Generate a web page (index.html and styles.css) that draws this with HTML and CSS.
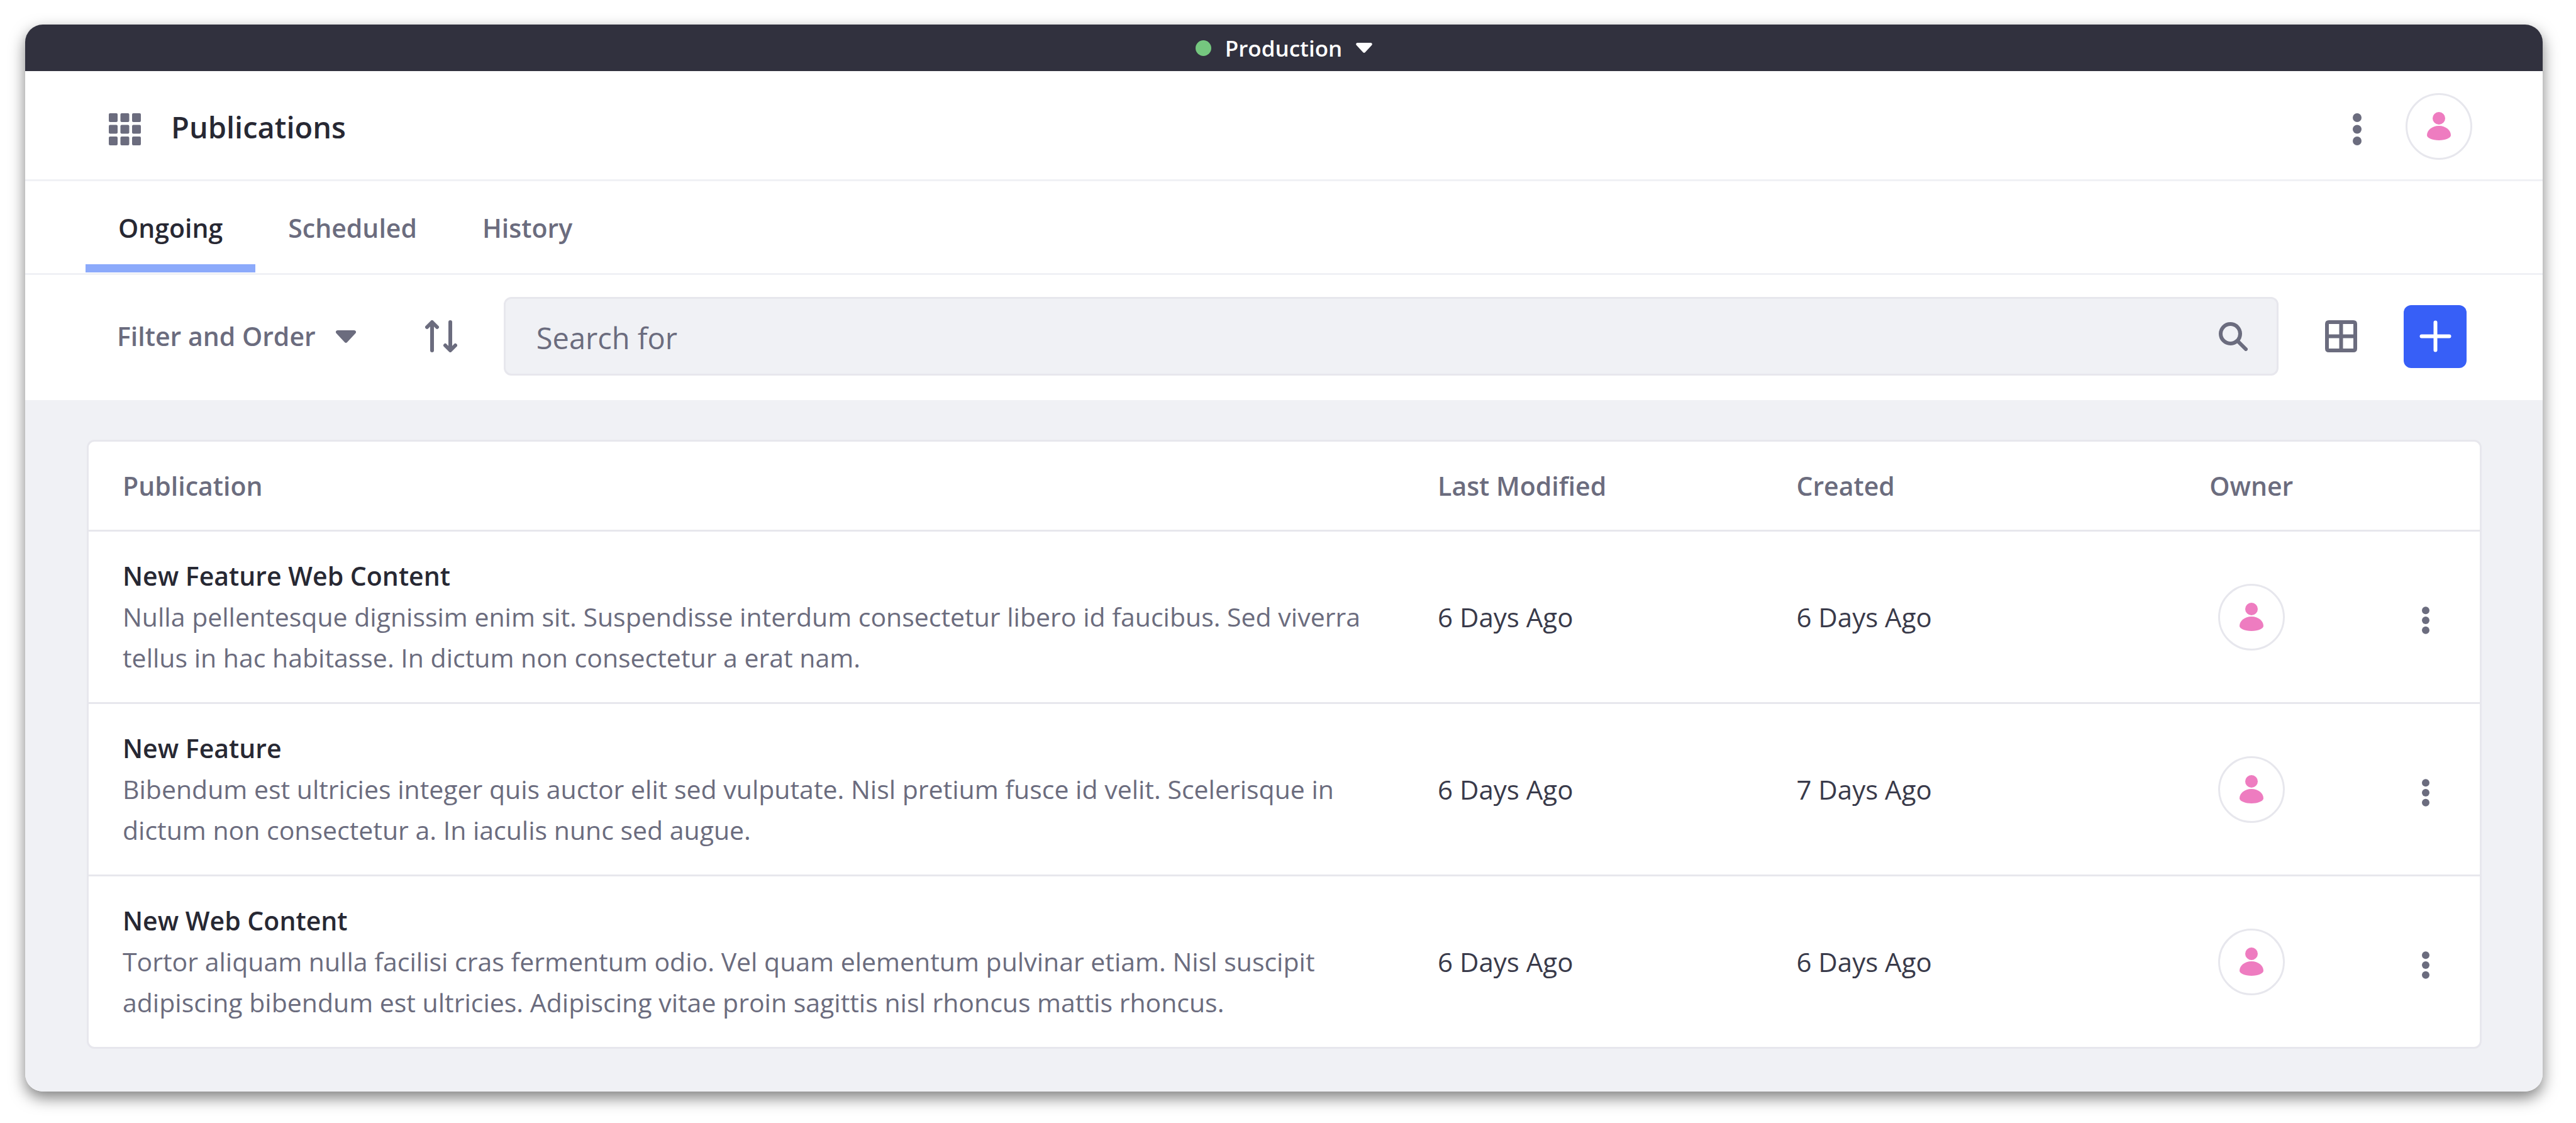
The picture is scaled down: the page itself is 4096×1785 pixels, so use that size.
FILE: index.html
```html
<!DOCTYPE html>
<html lang="en">
<head>
<meta charset="utf-8">
<title>Publications</title>
<link rel="stylesheet" href="styles.css">
</head>
<body>
<svg class="sprite" aria-hidden="true">
  <symbol id="kebab" viewBox="0 0 14 51"><circle cx="7" cy="7" r="7"/><circle cx="7" cy="25.5" r="7"/><circle cx="7" cy="44" r="7"/></symbol>
  <symbol id="caret" viewBox="0 0 32 20"><path d="M3 0h26c3 0 4 3 2 5L18 19q-2 2-4 0L1 5C-1 3 0 0 3 0z"/></symbol>
  <symbol id="user" viewBox="0 0 38 46"><circle cx="19" cy="10" r="10"/><path d="M19 22C8 22 0 29 0 37c0 4 8 8 19 8s19-4 19-8c0-8-8-15-19-15z"/></symbol>
</svg>
<div class="window">
  <div class="environment">
    <button type="button" class="environment-button"><span class="status-dot"></span>Production<svg class="caret-small"><use href="#caret"/></svg></button>
  </div>

  <header class="header">
    <button type="button" class="icon-button" aria-label="Applications">
      <svg class="icon" viewBox="0 0 51 51"><g><rect width="14" height="14" rx="2"/><rect x="18.500" width="14" height="14" rx="2"/><rect x="37" width="14" height="14" rx="2"/><rect y="18.500" width="14" height="14" rx="2"/><rect x="18.500" y="18.500" width="14" height="14" rx="2"/><rect x="37" y="18.500" width="14" height="14" rx="2"/><rect y="37" width="14" height="14" rx="2"/><rect x="18.500" y="37" width="14" height="14" rx="2"/><rect x="37" y="37" width="14" height="14" rx="2"/></g></svg>
    </button>
    <h1 class="title">Publications</h1>
    <button type="button" class="icon-button header-menu" aria-label="Options"><svg class="kebab-large"><use href="#kebab"/></svg></button>
    <button type="button" class="avatar" aria-label="Account"><svg class="user"><use href="#user"/></svg></button>
  </header>

  <nav class="tabs">
    <a href="#ongoing" class="tab active" aria-current="page">Ongoing</a>
    <a href="#scheduled" class="tab">Scheduled</a>
    <a href="#history" class="tab">History</a>
  </nav>

  <div class="toolbar">
    <button type="button" class="filter">Filter and Order<svg class="caret"><use href="#caret"/></svg></button>
    <button type="button" class="sort" aria-label="Reverse order">
      <svg class="icon line" viewBox="0 0 51 51"><path d="M11 48V4M3 11l8-8 8 8M40 3v44M32 40l8 8 8-8"/></svg>
    </button>
    <form class="search">
      <input class="search-input" type="search" placeholder="Search for" aria-label="Search for">
      <button type="button" class="search-button" aria-label="Search"><svg class="search-icon line" viewBox="0 0 46 46"><circle cx="18.500" cy="18.500" r="15.500"/><path d="M30 30l13 13"/></svg></button>
    </form>
    <button type="button" class="view" aria-label="Card view">
      <svg class="icon line" viewBox="0 0 51 51"><path d="M6 3h39q3 0 3 3v39q0 3-3 3H6q-3 0-3-3V6q0-3 3-3zM25.500 3v45M3 25.500h45"/></svg>
    </button>
    <button type="button" class="add" aria-label="Add publication">
      <svg class="icon line" viewBox="0 0 51 51"><path d="M25.500 3.500v44M3.500 25.500h44"/></svg>
    </button>
  </div>

  <main class="content">
    <div class="card">
      <table class="table">
        <colgroup><col class="col-name"><col class="col-date"><col class="col-date"><col class="col-owner"><col></colgroup>
        <thead>
          <tr><th scope="col">Publication</th><th scope="col">Last Modified</th><th scope="col">Created</th><th scope="col" class="owner">Owner</th><td class="actions"></td></tr>
        </thead>
        <tbody>
          <tr>
            <td><a href="#feature-web-content" class="name">New Feature Web Content</a><p class="description">Nulla pellentesque dignissim enim sit. Suspendisse interdum consectetur libero id faucibus. Sed viverra tellus in hac habitasse. In dictum non consectetur a erat nam.</p></td>
            <td class="date">6 Days Ago</td>
            <td class="date">6 Days Ago</td>
            <td class="owner"><span class="avatar"><svg class="user"><use href="#user"/></svg></span></td>
            <td class="actions"><button type="button" class="row-menu" aria-label="Options"><svg class="kebab"><use href="#kebab"/></svg></button></td>
          </tr>
          <tr>
            <td><a href="#feature" class="name">New Feature</a><p class="description">Bibendum est ultricies integer quis auctor elit sed vulputate. Nisl pretium fusce id velit. Scelerisque in dictum non consectetur a. In iaculis nunc sed augue.</p></td>
            <td class="date">6 Days Ago</td>
            <td class="date">7 Days Ago</td>
            <td class="owner"><span class="avatar"><svg class="user"><use href="#user"/></svg></span></td>
            <td class="actions"><button type="button" class="row-menu" aria-label="Options"><svg class="kebab"><use href="#kebab"/></svg></button></td>
          </tr>
          <tr>
            <td><a href="#web-content" class="name">New Web Content</a><p class="description">Tortor aliquam nulla facilisi cras fermentum odio. Vel quam elementum pulvinar etiam. Nisl suscipit adipiscing bibendum est ultricies. Adipiscing vitae proin sagittis nisl rhoncus mattis rhoncus.</p></td>
            <td class="date">6 Days Ago</td>
            <td class="date">6 Days Ago</td>
            <td class="owner"><span class="avatar"><svg class="user"><use href="#user"/></svg></span></td>
            <td class="actions"><button type="button" class="row-menu" aria-label="Options"><svg class="kebab"><use href="#kebab"/></svg></button></td>
          </tr>
        </tbody>
      </table>
    </div>
  </main>
</div>
</body>
</html>
```
FILE: styles.css
```css
:root {
  --dark: #272833;
  --gray: #6b6c7e;
  --line: #e7e7ed;
  --surface: #f0f1f5;
}

* {
  box-sizing: border-box;
}

body {
  display: flex;
  min-height: 100vh;
  margin: 0;
  padding: 39px 53px 50px 40px;
  background: #fff;
  color: var(--dark);
  font-family: "Open Sans", "Noto Sans", sans-serif;
  font-size: 41px;
  line-height: 65px;
}

button {
  display: flex;
  align-items: center;
  padding: 0;
  border: 0;
  background: none;
  color: var(--gray);
  font: inherit;
  font-weight: 600;
}

a {
  color: inherit;
  text-decoration: none;
}

svg {
  display: block;
  flex: none;
  fill: currentColor;
}

.sprite {
  position: absolute;
  width: 0;
  height: 0;
}

.window {
  display: flex;
  flex: 1;
  flex-direction: column;
  overflow: hidden;
  border-radius: 28px;
  background: #fff;
  box-shadow: 0 10px 24px rgba(0, 0, 0, 0.5);
}

/* Environment switcher */
.environment {
  display: flex;
  justify-content: center;
  height: 74px;
  background: #31313e;
}

.environment-button {
  gap: 22px;
  color: #fff;
  font-size: 35px;
}

.status-dot {
  width: 25px;
  height: 25px;
  border-radius: 50%;
  background: #75c77f;
}

.caret-small {
  width: 26px;
  height: 16px;
}

/* Header */
.header {
  display: flex;
  align-items: center;
  height: 175px;
  padding: 3px 112px 0 133px;
  border-bottom: 3px solid var(--surface);
}

.icon-button {
  margin-top: 10px;
}

.icon {
  width: 51px;
  height: 51px;
}

.line {
  fill: none;
  stroke: currentColor;
  stroke-width: 6px;
  stroke-linecap: round;
  stroke-linejoin: round;
}

.title {
  flex: 1;
  margin: 4px 0 0 48px;
  font-size: 47px;
  font-weight: 600;
}

.header-menu {
  margin-right: 70px;
}

.kebab-large {
  width: 14px;
  height: 51px;
}

.avatar {
  display: flex;
  align-items: center;
  justify-content: center;
  width: 106px;
  height: 106px;
  border: 3px solid var(--line);
  border-radius: 50%;
  background: #fff;
  color: #ee7cc0;
}

.user {
  width: 38px;
  height: 46px;
}

/* Tabs */
.tabs {
  display: flex;
  height: 149px;
  padding-left: 96px;
  border-bottom: 3px solid var(--surface);
  color: var(--gray);
  font-weight: 600;
}

.tab {
  height: 145px;
  padding: 42px 52px 0;
}

.active {
  border-bottom: 13px solid #8caafb;
  color: var(--dark);
}

/* Toolbar */
.toolbar {
  display: flex;
  align-items: center;
  height: 199px;
  padding: 0 121px 4px 146px;
}

.filter {
  gap: 32px;
}

.caret {
  width: 32px;
  height: 20px;
}

.sort {
  margin: 0 74px 0 110px;
}

.search {
  display: flex;
  flex: 1;
  align-items: center;
  height: 125px;
  padding: 0 46px 0 49px;
  border: 3px solid var(--line);
  border-radius: 12px;
  background: var(--surface);
}

.search-input {
  flex: 1;
  height: 100%;
  padding: 4px 0 0;
  border: 0;
  background: none;
  color: var(--dark);
  font: inherit;
  font-size: 47px;
}

.search-input::placeholder {
  color: var(--gray);
  opacity: 1;
}

.search-icon {
  width: 46px;
  height: 46px;
}

.view {
  margin: 0 74px;
}

.add {
  justify-content: center;
  width: 100px;
  height: 100px;
  border-radius: 12px;
  background: #375ff7;
  color: #fff;
}

/* Publications table */
.content {
  flex: 1;
  padding: 63px 97px 68px 98px;
  background: var(--surface);
}

.card {
  border: 3px solid var(--line);
  border-radius: 12px;
  background: #fff;
}

.table {
  width: 100%;
  border-spacing: 0;
  table-layout: fixed;
}

.col-name {
  width: 55%;
}

.col-date {
  width: 15%;
}

.col-owner {
  width: 11%;
}

.table th {
  height: 140px;
  padding: 0 54px;
  color: var(--gray);
  font-weight: 600;
  text-align: left;
}

.table tbody td {
  padding: 38px 54px;
  border-top: 3px solid var(--line);
}

.table .date {
  color: #393a4a;
  font-size: 42px;
}

.table .owner,
.table tbody .owner {
  padding: 0 4px 0 0;
  text-align: center;
}

.table tbody .actions {
  padding: 10px 20px 0 0;
}

.owner .avatar {
  margin: 0 auto;
}

.name {
  display: block;
  font-weight: 600;
}

.description {
  margin: 0;
  color: var(--gray);
}

.row-menu {
  margin: 0 auto;
}

.kebab {
  width: 12px;
  height: 44px;
}
```
